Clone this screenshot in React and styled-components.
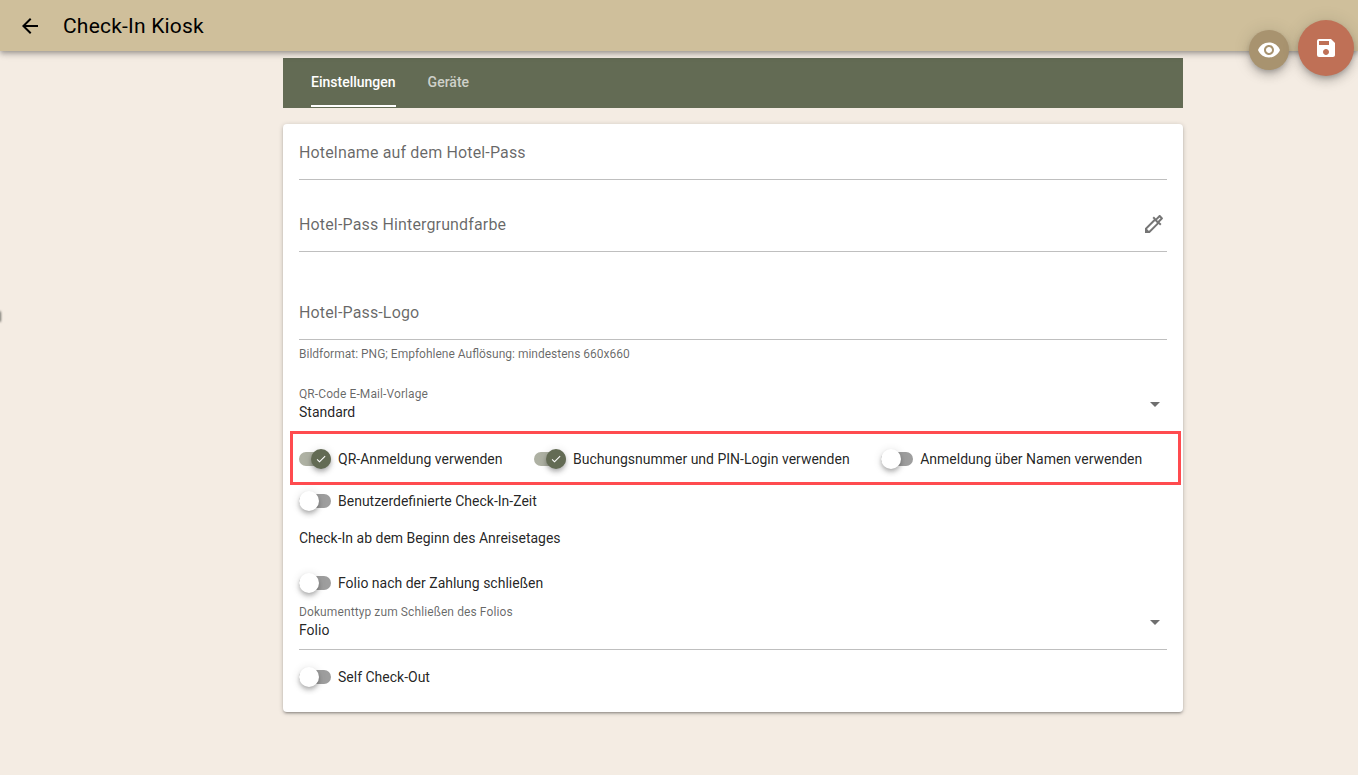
import styled, { createGlobalStyle } from 'styled-components';
import {
  MdArrowBack,
  MdArrowDropDown,
  MdCheck,
  MdOutlineColorize,
  MdSave,
  MdVisibility,
} from 'react-icons/md';

const GlobalStyle = createGlobalStyle`
  html, body {
    margin: 0;
    padding: 0;
    background: #f4ece3;
    font-family: Roboto, "Liberation Sans", sans-serif;
    overflow: hidden;
  }
  * { box-sizing: border-box; }
`;

const Page = styled.div`
  position: relative;
  width: 1358px;
  height: 775px;
  overflow: hidden;
`;

const AppBar = styled.header`
  height: 51px;
  display: flex;
  align-items: center;
  padding-left: 18px;
  gap: 21px;
  background: #cfbf9b;
  color: #000;
  box-shadow: 0 2px 4px -1px rgba(0, 0, 0, 0.2), 0 4px 5px rgba(0, 0, 0, 0.14), 0 1px 10px rgba(0, 0, 0, 0.12);
  position: relative;
  svg { font-size: 24px; }
`;

const Title = styled.h1`
  margin: 0;
  font-size: 21px;
  font-weight: 400;
  letter-spacing: 0.2px;
`;

const Main = styled.main`
  width: 900px;
  margin: 7px 0 0 283px;
  display: flex;
  flex-direction: column;
  gap: 16px;
`;

const TabBar = styled.nav`
  height: 50px;
  display: flex;
  gap: 32px;
  padding-left: 28px;
  background: #636b54;
`;

const Tab = styled.div`
  display: flex;
  align-items: center;
  height: 49px;
  font-size: 14px;
  font-weight: 500;
  color: ${(p) => (p.$active ? '#fff' : 'rgba(255,255,255,0.7)')};
  border-bottom: 2px solid ${(p) => (p.$active ? '#fff' : 'transparent')};
  padding-top: 1px;
`;

const Card = styled.section`
  padding: 16px 16px 14px;
  background: #fff;
  border-radius: 4px;
  box-shadow: 0 2px 2px rgba(0, 0, 0, 0.14), 0 3px 1px -2px rgba(0, 0, 0, 0.12), 0 1px 5px rgba(0, 0, 0, 0.2);
  display: flex;
  flex-direction: column;
`;

const Field = styled.div`
  height: ${(p) => p.$height}px;
  display: flex;
  align-items: flex-end;
  justify-content: space-between;
  padding-bottom: 17px;
  border-bottom: 1px solid #bfbfbf;
  font-size: 16px;
  letter-spacing: 0.15px;
  color: rgba(0, 0, 0, 0.6);
  svg { font-size: 24px; color: #757575; margin: 0 1px -2px 0; }
`;

const Hint = styled.div`
  margin-top: 7px;
  height: 14px;
  font-size: 12px;
  line-height: 14px;
  color: rgba(0, 0, 0, 0.6);
`;

const Select = styled.div`
  height: 46px;
  margin-top: ${(p) => p.$top || 0}px;
  padding-top: ${(p) => (p.$line ? '1px' : '0')};
  display: flex;
  align-items: flex-start;
  justify-content: space-between;
  border-bottom: 1px solid ${(p) => (p.$line ? '#bfbfbf' : 'transparent')};
  svg { font-size: 24px; color: #6f6f6f; margin: 5px 0.5px 0 0; }
`;

const SelectText = styled.div`
  display: flex;
  flex-direction: column;
`;

const SelectLabel = styled.span`
  font-size: 12px;
  line-height: 14px;
  letter-spacing: 0.1px;
  margin-bottom: 3px;
  color: rgba(0, 0, 0, 0.6);
`;

const SelectValue = styled.span`
  font-size: 14px;
  line-height: 16px;
  color: rgba(0, 0, 0, 0.87);
`;

const SwitchRow = styled.div`
  position: relative;
  height: 42px;
  margin-top: ${(p) => p.$top || 0}px;
  display: flex;
  align-items: center;
  gap: 31.5px;
`;

const Highlight = styled.div`
  position: absolute;
  left: -9px;
  right: -14px;
  top: -7px;
  bottom: -5px;
  border: 3px solid #ff4b4f;
  pointer-events: none;
`;

const SwitchWrap = styled.label`
  display: flex;
  align-items: center;
  gap: 7px;
  font-size: 14px;
  color: rgba(0, 0, 0, 0.87);
`;

const Track = styled.span`
  position: relative;
  width: 32px;
  height: 14px;
  border-radius: 7px;
  background: ${(p) => (p.$on ? '#aeb1a3' : '#9e9e9e')};
`;

const Thumb = styled.span`
  position: absolute;
  top: -3px;
  left: ${(p) => (p.$on ? '12px' : '0')};
  width: 20px;
  height: 20px;
  border-radius: 50%;
  display: flex;
  align-items: center;
  justify-content: center;
  background: ${(p) => (p.$on ? '#636b54' : '#fff')};
  color: #fff;
  box-shadow: 0 2px 4px -1px rgba(0, 0, 0, 0.2), 0 4px 5px rgba(0, 0, 0, 0.14), 0 1px 10px rgba(0, 0, 0, 0.12);
  svg { font-size: 12px; }
`;

const PlainText = styled.div`
  height: 32px;
  display: flex;
  align-items: center;
  font-size: 14px;
  color: rgba(0, 0, 0, 0.87);
`;

const Fab = styled.button`
  position: absolute;
  left: ${(p) => p.$x - p.$size / 2}px;
  top: ${(p) => p.$y - p.$size / 2}px;
  width: ${(p) => p.$size}px;
  height: ${(p) => p.$size}px;
  padding: 0;
  border: 0;
  border-radius: 50%;
  display: flex;
  align-items: center;
  justify-content: center;
  background: ${(p) => p.$color};
  color: #fff;
  box-shadow: 0 3px 5px -1px rgba(0, 0, 0, 0.2), 0 6px 10px rgba(0, 0, 0, 0.14), 0 1px 18px rgba(0, 0, 0, 0.12);
  svg { font-size: 24px; }
`;

const EdgeMark = styled.div`
  position: absolute;
  left: -2px;
  top: 311px;
  width: 3px;
  height: 11px;
  border-radius: 2px;
  background: #77766f;
  filter: blur(1px);
`;

const Switch = ({ on, children }) => (
  <SwitchWrap>
    <Track $on={on}>
      <Thumb $on={on}>{on && <MdCheck />}</Thumb>
    </Track>
    {children}
  </SwitchWrap>
);

const App = () => (
  <Page>
    <GlobalStyle />
    <AppBar>
      <MdArrowBack />
      <Title>Check-In Kiosk</Title>
    </AppBar>
    <Main>
      <TabBar>
        <Tab $active>Einstellungen</Tab>
        <Tab>Geräte</Tab>
      </TabBar>
      <Card>
        <Field $height={40}>Hotelname auf dem Hotel-Pass</Field>
        <Field $height={72}>
          Hotel-Pass Hintergrundfarbe
          <MdOutlineColorize />
        </Field>
        <Field $height={88}>Hotel-Pass-Logo</Field>
        <Hint>Bildformat: PNG; Empfohlene Auflösung: mindestens 660x660</Hint>
        <Select $top={26}>
          <SelectText>
            <SelectLabel>QR-Code E-Mail-Vorlage</SelectLabel>
            <SelectValue>Standard</SelectValue>
          </SelectText>
          <MdArrowDropDown />
        </Select>
        <SwitchRow $top={5}>
          <Highlight />
          <Switch on>QR-Anmeldung verwenden</Switch>
          <Switch on>Buchungsnummer und PIN-Login verwenden</Switch>
          <Switch>Anmeldung über Namen verwenden</Switch>
        </SwitchRow>
        <SwitchRow>
          <Switch>Benutzerdefinierte Check-In-Zeit</Switch>
        </SwitchRow>
        <PlainText>Check-In ab dem Beginn des Anreisetages</PlainText>
        <SwitchRow $top={8}>
          <Switch>Folio nach der Zahlung schließen</Switch>
        </SwitchRow>
        <Select $line>
          <SelectText>
            <SelectLabel>Dokumenttyp zum Schließen des Folios</SelectLabel>
            <SelectValue>Folio</SelectValue>
          </SelectText>
          <MdArrowDropDown />
        </Select>
        <SwitchRow $top={6}>
          <Switch>Self Check-Out</Switch>
        </SwitchRow>
      </Card>
    </Main>
    <Fab $x={1269} $y={50} $size={40} $color="#a8936f"><MdVisibility /></Fab>
    <Fab $x={1326} $y={48} $size={56} $color="#bf7056"><MdSave /></Fab>
    <EdgeMark />
  </Page>
);

export default App;
